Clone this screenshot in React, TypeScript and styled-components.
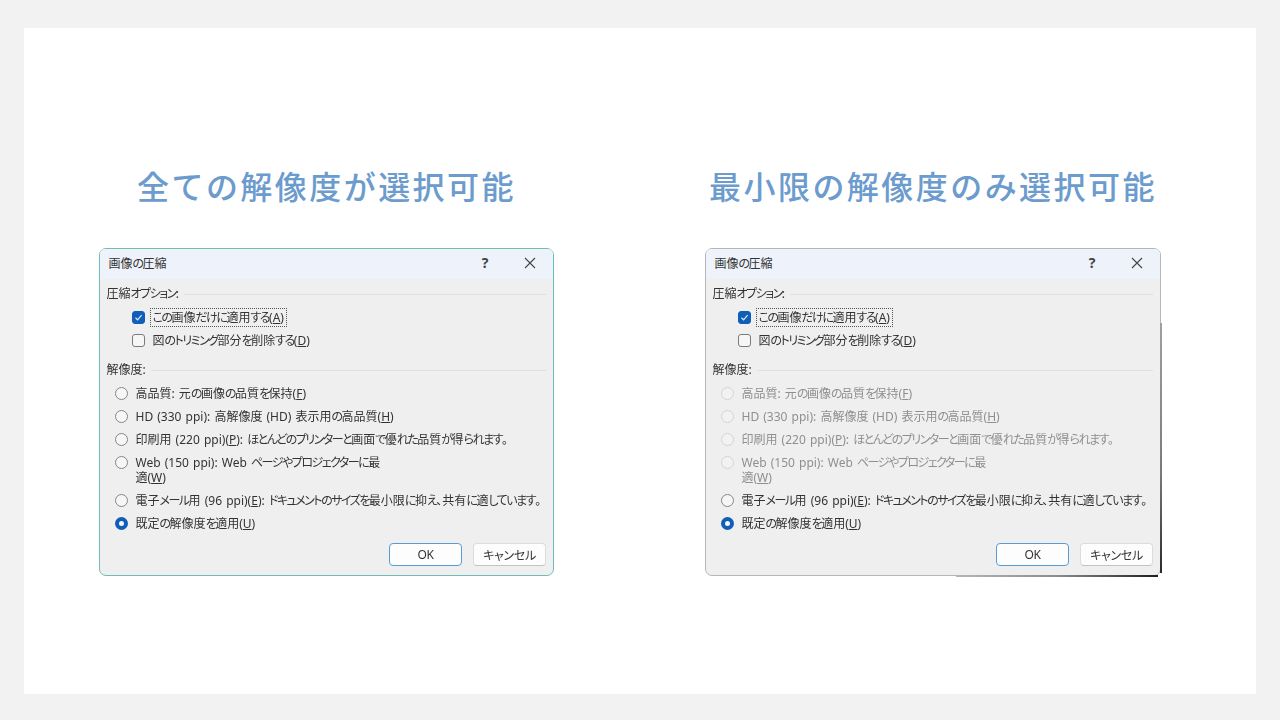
import React from 'react';
import styled, { createGlobalStyle } from 'styled-components';

const GlobalStyle = createGlobalStyle`
  html, body {
    margin: 0;
    padding: 0;
    background: #f2f2f2;
  }
`;

const Page = styled.div`
  width: 1280px;
  height: 720px;
  box-sizing: border-box;
  padding: 28px 24px 26px;
  overflow: hidden;
`;

const Slide = styled.main`
  height: 100%;
  box-sizing: border-box;
  background: #fff;
  padding: 134px 0 0 75px;
  display: grid;
  grid-template-columns: 455px 456px;
  column-gap: 151px;
  justify-content: start;
  align-content: start;
`;

const Column = styled.section`
  display: flex;
  flex-direction: column;
  align-items: center;
`;

const Heading = styled.h2`
  margin: 0 0 40px;
  height: 46px;
  line-height: 46px;
  font-family: 'Noto Sans CJK JP', sans-serif;
  font-size: 32px;
  font-weight: 500;
  letter-spacing: 2.45px;
  color: #6c9bcd;
  white-space: nowrap;
`;

const Dialog = styled.div<{ $edge: string; $dark?: boolean }>`
  position: relative;
  width: 100%;
  height: 328px;
  box-sizing: border-box;
  display: flex;
  flex-direction: column;
  background: #efefef;
  border: 1.5px solid ${(p) => p.$edge};
  border-radius: 7px;
  font-family: 'Noto Sans', 'Noto Sans CJK JP', sans-serif;
  font-size: 12px;
  font-feature-settings: 'palt';
  word-spacing: 1px;
  color: #333;
  filter: blur(0.5px);

  ${(p) =>
    p.$dark &&
    `
    &::after {
      content: '';
      position: absolute;
      top: 74px;
      bottom: 2px;
      right: -1.5px;
      width: 1.5px;
      background: linear-gradient(#a0a0a0, #7a7a7a 60%, #2b2b2b);
    }
    &::before {
      content: '';
      position: absolute;
      left: 55%;
      right: 2px;
      bottom: -1.5px;
      height: 1.5px;
      background: linear-gradient(to right, #b4b6b8, #8a8c8f 50%, #1f1f1f);
    }
  `}
`;

const TitleBar = styled.header`
  flex: none;
  height: 30px;
  box-sizing: border-box;
  display: flex;
  align-items: center;
  padding: 0 17px 3px 8.5px;
  background: #eef2fa;
  border-radius: 5px 5px 0 0;
`;

const TitleText = styled.span`
  flex: 1;
  font-size: 12px;
`;

const HelpMark = styled.span`
  width: 14px;
  text-align: center;
  font-size: 14px;
  font-weight: 700;
  color: #444;
  margin-right: 32px;
`;

const Body = styled.div`
  flex: 1;
  display: flex;
  flex-direction: column;
  padding: 7px 7px 9px 6.5px;
`;

const GroupHeader = styled.div`
  height: 16px;
  display: flex;
  align-items: center;
  gap: 5px;
  line-height: 16px;

  &::after {
    content: '';
    flex: 1;
    height: 1px;
    background: #dfdfdf;
  }
`;

const OptionList = styled.div<{ $indent: number; $gapBelow?: number }>`
  display: flex;
  flex-direction: column;
  padding-left: ${(p) => p.$indent}px;
  margin-top: 4px;
  margin-bottom: ${(p) => p.$gapBelow ?? 0}px;
`;

const Option = styled.div<{ $disabled?: boolean }>`
  min-height: 23px;
  display: flex;
  align-items: flex-start;
  gap: 7px;
  line-height: 15px;
  padding: 4px 0;
  box-sizing: border-box;
  white-space: pre;
  color: ${(p) => (p.$disabled ? '#8f8f8f' : 'inherit')};
`;

const Label = styled.span<{ $focused?: boolean }>`
  padding: 0 1px;
  outline: ${(p) => (p.$focused ? '1px dotted #555' : 'none')};
  outline-offset: 1.5px;
`;

const Kana = styled.span`
  letter-spacing: -1.5px;
`;

const Box = styled.span<{ $checked?: boolean }>`
  flex: none;
  width: 13px;
  height: 13px;
  box-sizing: border-box;
  margin-top: 1px;
  border-radius: 3px;
  display: flex;
  align-items: center;
  justify-content: center;
  border: 1px solid ${(p) => (p.$checked ? '#0f5fb8' : '#7a7a7a')};
  background: ${(p) => (p.$checked ? '#0f5fb8' : '#f6f6f6')};
`;

const Radio = styled.span<{ $checked?: boolean; $disabled?: boolean }>`
  flex: none;
  width: 13px;
  height: 13px;
  box-sizing: border-box;
  margin-top: 1px;
  border-radius: 50%;
  background: ${(p) => (p.$disabled ? '#f2f2f2' : '#f6f6f6')};
  border: ${(p) =>
    p.$checked
      ? '4px solid #0f5fb8'
      : `1.5px solid ${p.$disabled ? '#d2d2d2' : '#858585'}`};
`;

const Footer = styled.footer`
  margin-top: auto;
  display: flex;
  justify-content: flex-end;
  gap: 11px;
`;

const Button = styled.button<{ $primary?: boolean }>`
  width: 73px;
  height: 23px;
  padding: 0;
  background: #fdfdfd;
  border: ${(p) => (p.$primary ? '1.5px solid #5b9bd5' : '1px solid #dcdcdc')};
  border-bottom-color: ${(p) => (p.$primary ? '#5b9bd5' : '#c4c4c4')};
  border-radius: 4px;
  font: inherit;
  font-size: 12px;
  letter-spacing: -0.3px;
  color: #333;
`;

function Check() {
  return (
    <svg width="9" height="9" viewBox="0 0 9 9" fill="none">
      <path d="M1.5 4.8 3.6 6.8 7.6 2.2" stroke="#dfeaf7" strokeWidth="1.2" />
    </svg>
  );
}

function CloseIcon() {
  return (
    <svg width="12" height="12" viewBox="0 0 12 12" fill="none">
      <path d="M1 1 11 11M11 1 1 11" stroke="#444" strokeWidth="1.1" />
    </svg>
  );
}

// the original UI font sets kana much narrower than kanji
function Jp({ text }: { text: string }) {
  const parts = text.split(/([\u3040-\u30ff]+)/);
  return (
    <>
      {parts.map((part, i) => (i % 2 === 1 ? <Kana key={i}>{part}</Kana> : part))}
    </>
  );
}

function Accel({ before, mark, after }: { before: string; mark: string; after: string }) {
  return (
    <>
      <Jp text={before} />
      <u>{mark}</u>
      <Jp text={after} />
    </>
  );
}

const resolutions = [
  { id: 'hq', locked: true, before: '高品質: 元の画像の品質を保持(', mark: 'F', after: ')' },
  { id: 'hd', locked: true, before: 'HD (330 ppi): 高解像度 (HD) 表示用の高品質(', mark: 'H', after: ')' },
  { id: 'print', locked: true, before: '印刷用 (220 ppi)(', mark: 'P', after: '): ほとんどのプリンターと画面で優れた品質が得られます。' },
  { id: 'web', locked: true, before: 'Web (150 ppi): Web ページやプロジェクターに最\n適(', mark: 'W', after: ')' },
  { id: 'mail', locked: false, before: '電子メール用 (96 ppi)(', mark: 'E', after: '): ドキュメントのサイズを最小限に抑え、共有に適しています。' },
  { id: 'default', locked: false, checked: true, before: '既定の解像度を適用(', mark: 'U', after: ')' },
];

interface DialogProps {
  edge: string;
  dark?: boolean;
  limited?: boolean;
}

function CompressDialog({ edge, dark, limited }: DialogProps) {
  return (
    <Dialog $edge={edge} $dark={dark}>
      <TitleBar>
        <TitleText><Jp text="画像の圧縮" /></TitleText>
        <HelpMark>?</HelpMark>
        <CloseIcon />
      </TitleBar>
      <Body>
        <GroupHeader><span><Jp text="圧縮オプション:" /></span></GroupHeader>
        <OptionList $indent={25} $gapBelow={10}>
          <Option>
            <Box $checked><Check /></Box>
            <Label $focused><Accel before="この画像だけに適用する(" mark="A" after=")" /></Label>
          </Option>
          <Option>
            <Box />
            <Label><Accel before="図のトリミング部分を削除する(" mark="D" after=")" /></Label>
          </Option>
        </OptionList>
        <GroupHeader>解像度:</GroupHeader>
        <OptionList $indent={8}>
          {resolutions.map((r) => {
            const disabled = r.locked && limited;
            return (
              <Option key={r.id} $disabled={disabled}>
                <Radio $checked={r.checked} $disabled={disabled} />
                <Label><Accel before={r.before} mark={r.mark} after={r.after} /></Label>
              </Option>
            );
          })}
        </OptionList>
        <Footer>
          <Button $primary>OK</Button>
          <Button>キャンセル</Button>
        </Footer>
      </Body>
    </Dialog>
  );
}

export default function App() {
  return (
    <Page>
      <GlobalStyle />
      <Slide>
        <Column>
          <Heading>全ての解像度が選択可能</Heading>
          <CompressDialog edge="#6fbdb6" />
        </Column>
        <Column>
          <Heading>最小限の解像度のみ選択可能</Heading>
          <CompressDialog edge="#b4b6b8" dark limited />
        </Column>
      </Slide>
    </Page>
  );
}
